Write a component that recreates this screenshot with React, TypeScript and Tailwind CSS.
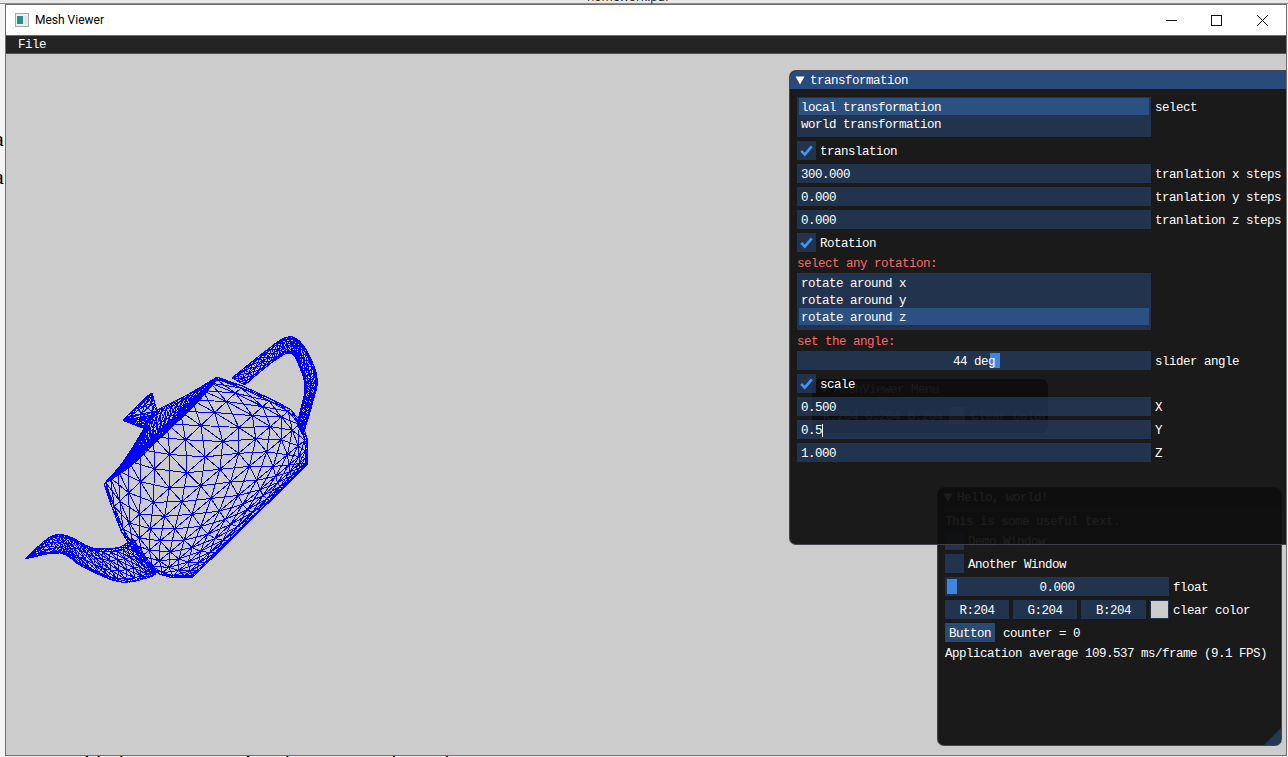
import React from 'react';

type P = [number, number];

// catmull-rom through the control points, t in 0..1
function curve(pts: P[], t: number): P {
  const n = pts.length - 1;
  const f = Math.min(t * n, n - 0.0001);
  const i = Math.floor(f);
  const u = f - i;
  const p0 = pts[Math.max(i - 1, 0)];
  const p1 = pts[i];
  const p2 = pts[i + 1];
  const p3 = pts[Math.min(i + 2, n)];
  const c = (a: number, b: number, d: number, e: number) =>
    0.5 * (2 * b + (d - a) * u + (2 * a - 5 * b + 4 * d - e) * u * u + (3 * b - a - 3 * d + e) * u * u * u);
  return [c(p0[0], p1[0], p2[0], p3[0]), c(p0[1], p1[1], p2[1], p3[1])];
}

// wireframe tube between two silhouette curves: rings, long edges, diagonals
function band(a: P[], b: P[], sections: number, around: number, ease = 1) {
  let d = '';
  const seg = (p: P, q: P) => {
    d += `M${p[0].toFixed(1)} ${p[1].toFixed(1)}L${q[0].toFixed(1)} ${q[1].toFixed(1)}`;
  };
  const grid: P[][] = [];
  for (let i = 0; i <= sections; i++) {
    const t = 1 - Math.pow(1 - i / sections, ease);
    const A = curve(a, t);
    const B = curve(b, t);
    const row: P[] = [];
    for (let j = 0; j < around; j++) {
      const s = (1 - Math.cos((j / around) * Math.PI * 2)) / 2;
      row.push([A[0] + (B[0] - A[0]) * s, A[1] + (B[1] - A[1]) * s]);
    }
    grid.push(row);
  }
  for (let i = 0; i <= sections; i++) {
    for (let j = 0; j < around; j++) {
      const next = (j + 1) % around;
      seg(grid[i][j], grid[i][next]);
      if (i < sections) {
        seg(grid[i][j], grid[i + 1][j]);
        seg(grid[i][j], grid[i + 1][next]);
      }
    }
  }
  return d;
}

const teapot = [
  // body
  band(
    [[104, 484], [113, 510], [123, 535], [135, 552], [150, 568], [168, 577], [193, 577]],
    [[217, 377], [245, 387], [277, 402], [297, 415], [307, 438], [307, 455], [307, 465]],
    10,
    26,
    1.6,
  ),
  // lid
  band(
    [[104, 484], [123, 462], [142, 432], [153, 413], [187, 395], [217, 377]],
    [[104, 484], [118, 474], [132, 465], [155, 443], [177, 422], [217, 380]],
    32,
    8,
  ),
  // rim
  band(
    [[104, 484], [130, 458], [160, 430], [190, 402], [217, 377]],
    [[104, 484], [132, 465], [162, 436], [192, 408], [217, 380]],
    40,
    4,
  ),
  // knob
  band(
    [[151, 393], [138, 405], [125, 418], [124, 421], [130, 423], [140, 427]],
    [[152, 393], [154, 400], [157, 412], [154, 417], [149, 421], [145, 427]],
    8,
    8,
  ),
  // spout
  band(
    [[25, 559], [50, 537], [68, 536], [93, 548], [120, 547], [132, 538]],
    [[25, 559], [60, 553], [83, 567], [120, 582], [150, 577], [157, 572]],
    20,
    10,
  ),
  // handle
  band(
    [[232, 378], [263, 353], [287, 337], [303, 345], [317, 377], [312, 405], [303, 435]],
    [[245, 385], [270, 364], [290, 353], [300, 368], [305, 388], [300, 412], [297, 425]],
    28,
    8,
  ),
].join('') + 'M193 577L307 465M307 438L307 465';

const frame = 'bg-[rgba(41,74,122,0.54)]';

function Check({ on }: { on?: boolean }) {
  return (
    <div className={`w-[19px] h-[19px] flex items-center justify-center shrink-0 ${frame}`}>
      {on && (
        <svg width="19" height="19" viewBox="0 0 19 19" fill="none">
          <path d="M4.2 9.8L7.8 13.6L14.8 5.4" stroke="#4296fa" strokeWidth="2.6" />
        </svg>
      )}
    </div>
  );
}

function CheckRow({ label, on }: { label: string; on?: boolean }) {
  return (
    <div className="flex items-center gap-1 h-[19px]">
      <Check on={on} />
      <span className="pt-[2px]">{label}</span>
    </div>
  );
}

function InputRow({ value, label, caret }: { value: string; label: string; caret?: boolean }) {
  return (
    <div className="flex items-center gap-1 h-[19px]">
      <div className={`w-[354px] h-full flex items-center px-1 pt-[2px] ${frame}`}>
        {value}
        {caret && <span className="w-px h-[13px] bg-white" />}
      </div>
      <span className="pt-[2px] whitespace-nowrap">{label}</span>
    </div>
  );
}

function ListBox({ items, active, height }: { items: string[]; active: number; height: string }) {
  return (
    <div className={`w-[354px] px-[2px] pt-px ${height} ${frame}`}>
      {items.map((item, i) => (
        <div key={item} className={`h-[17px] flex items-center px-[2px] pt-[2px] ${i === active ? 'bg-[rgba(66,150,250,0.31)]' : ''}`}>
          {item}
        </div>
      ))}
    </div>
  );
}

function Triangle({ className }: { className: string }) {
  return (
    <svg width="10" height="9" viewBox="0 0 10 9" className={className}>
      <path d="M0.5 0.5H9.5L5 8.5Z" fill="currentColor" />
    </svg>
  );
}

function TransformPanel() {
  return (
    <div className="absolute left-[783px] top-[16px] w-[510px] h-[475px] border border-[rgba(110,110,128,0.5)] rounded-[7px] bg-[rgba(15,15,15,0.94)] overflow-hidden">
      <div className="h-[18px] bg-[#294a7a] flex items-center gap-[5px] pl-[5px]">
        <Triangle className="text-white" />
        <span className="pt-[2px]">transformation</span>
      </div>
      <div className="flex flex-col gap-1 px-[7px] pt-2">
        <div className="flex gap-1">
          <ListBox items={['local transformation', 'world transformation']} active={0} height="h-[40px]" />
          <span className="mt-[2px] h-[17px] flex items-center">select</span>
        </div>
        <CheckRow label="translation" on />
        <InputRow value="300.000" label="tranlation x steps" />
        <InputRow value="0.000" label="tranlation y steps" />
        <InputRow value="0.000" label="tranlation z steps" />
        <CheckRow label="Rotation" on />
        <div className="h-[13px] pt-[2px] flex items-center text-[#ff6666]">select any rotation:</div>
        <ListBox items={['rotate around x', 'rotate around y', 'rotate around z']} active={2} height="h-[57px]" />
        <div className="h-[13px] pt-[2px] flex items-center text-[#ff6666]">set the angle:</div>
        <div className="flex items-center gap-1 h-[19px]">
          <div className={`relative w-[354px] h-full flex items-center justify-center ${frame}`}>
            <div className="absolute left-[193px] top-[2px] w-[10px] h-[15px] bg-[#3d85e0]" />
            <span className="relative pt-[2px]">44 deg</span>
          </div>
          <span className="pt-[2px]">slider angle</span>
        </div>
        <CheckRow label="scale" on />
        <InputRow value="0.500" label="X" />
        <InputRow value="0.5" label="Y" caret />
        <InputRow value="1.000" label="Z" />
      </div>
    </div>
  );
}

function MenuGhost() {
  return (
    <div className="absolute left-[806px] top-[325px] w-[236px] h-[54px] rounded-[7px] bg-[#0a0a0a] overflow-hidden text-white/80">
      <div className="h-[19px] flex items-center gap-1 pl-2">
        <Triangle className="text-white/80" />
        <span className="pt-[2px]">MeshViewer Menu</span>
      </div>
      <div className="flex items-center pl-[11px] mt-[9px] whitespace-nowrap">
        <span className="w-[44px] pt-[2px]">R:204</span>
        <span className="w-[45px] pt-[2px]">G:204</span>
        <span className="w-[43px] pt-[2px]">B:204</span>
        <div className="w-[17px] h-[17px] bg-[#999999] mr-[6px]" />
        <span className="pt-[2px]">Clear Color</span>
      </div>
    </div>
  );
}

function HelloWindow() {
  return (
    <div className="absolute left-[931px] top-[433px] w-[345px] h-[259px] border border-[rgba(110,110,128,0.5)] rounded-[7px] bg-[rgba(15,15,15,0.94)] overflow-hidden">
      <div className="h-[18px] bg-[#0a0a0a] flex items-center gap-1 pl-[5px]">
        <Triangle className="text-white" />
        <span className="pt-[2px]">Hello, world!</span>
      </div>
      <div className="flex flex-col gap-1 px-[7px] pt-2">
        <div className="h-[13px] pt-[2px] flex items-center">This is some useful text.</div>
        <CheckRow label="Demo Window" />
        <CheckRow label="Another Window" />
        <div className="flex items-center gap-1 h-[19px]">
          <div className={`relative w-[224px] h-full flex items-center justify-center ${frame}`}>
            <div className="absolute left-[2px] top-[2px] w-[10px] h-[15px] bg-[#3d85e0]" />
            <span className="relative pt-[2px]">0.000</span>
          </div>
          <span className="pt-[2px]">float</span>
        </div>
        <div className="flex items-center gap-1 h-[19px]">
          <div className={`w-[64px] h-full pt-[2px] flex items-center justify-center ${frame}`}>R:204</div>
          <div className={`w-[64px] h-full pt-[2px] flex items-center justify-center ${frame}`}>G:204</div>
          <div className={`w-[65px] h-full pt-[2px] flex items-center justify-center ${frame}`}>B:204</div>
          <div className="w-[19px] h-[19px] bg-[#cccccc] border border-[#22344e]" />
          <span className="pt-[2px]">clear color</span>
        </div>
        <div className="flex items-center gap-2 h-[19px]">
          <div className="w-[50px] h-full pt-[2px] flex items-center justify-center bg-[rgba(66,150,250,0.4)]">Button</div>
          <span className="pt-[2px]">counter = 0</span>
        </div>
        <div className="h-[13px] pt-[2px] flex items-center whitespace-nowrap">Application average 109.537 ms/frame (9.1 FPS)</div>
      </div>
      <div className="absolute right-0 bottom-0 w-[17px] h-[17px] bg-[rgba(66,150,250,0.25)] [clip-path:polygon(100%_0,100%_100%,0_100%)]" />
    </div>
  );
}

export default function App() {
  return (
    <div className="relative w-[1288px] h-[757px] overflow-hidden bg-[#f4f4f4]">
      {/* document behind the window */}
      <div className="h-[4px] bg-[#e8e8e8] border-b border-[#8a8a8a]" />
      <span className="absolute left-[587px] top-[-12px] text-[12px] text-[#222] font-['Open_Sans',sans-serif]">homework.pdf</span>
      <span className="absolute left-[-6px] top-[122px] text-[22px] text-black font-['Liberation_Serif',serif]">a</span>
      <span className="absolute left-[-6px] top-[160px] text-[22px] text-black font-['Liberation_Serif',serif]">a</span>
      <span className="absolute left-[68px] top-[750px] text-[22px] leading-[24px] text-black whitespace-nowrap font-['Liberation_Serif',serif]">
        with the accompanying documents, the code
      </span>

      <div className="absolute left-[5px] top-[4px] w-[1282px] h-[752px] border border-[#6e6e6e] flex flex-col bg-white">
        <div className="h-[31px] shrink-0 border-b border-[#6e6e6e] bg-white flex items-center font-['Roboto',sans-serif] text-[12px] text-black">
          <svg width="14" height="14" viewBox="0 0 14 14" className="ml-[9px] mr-[6px]">
            <rect x="0.5" y="0.5" width="13" height="13" fill="#eef0f0" stroke="#a8a8a8" />
            <rect x="2" y="3" width="6" height="8" fill="#2f8a8a" />
            <rect x="8" y="3" width="4" height="8" fill="#dfe8ea" />
          </svg>
          <span>Mesh Viewer</span>
          <svg width="102" height="12" viewBox="0 0 102 12" fill="none" stroke="#111" className="ml-auto mr-[18px]">
            <path d="M0 6.5H11" />
            <rect x="45.5" y="1.5" width="10" height="10" />
            <path d="M91 1L102 12M102 1L91 12" />
          </svg>
        </div>
        <div className="h-[18px] shrink-0 border-b border-[#555] bg-[#242424] pl-3 flex items-center text-white font-['Liberation_Mono',monospace] text-[12.5px] tracking-[-0.5px] leading-[14px]">
          File
        </div>
        <div className="relative flex-1 bg-[#cccccc] overflow-hidden text-white font-['Liberation_Mono',monospace] text-[12.5px] tracking-[-0.5px] leading-[14px]">
          <svg className="absolute left-0 top-0" width="1280" height="700" viewBox="6 54 1280 700" fill="none">
            <path d={teapot} stroke="#0000ff" strokeWidth="1" shapeRendering="crispEdges" />
          </svg>
          <MenuGhost />
          <HelloWindow />
          <TransformPanel />
        </div>
      </div>
    </div>
  );
}
